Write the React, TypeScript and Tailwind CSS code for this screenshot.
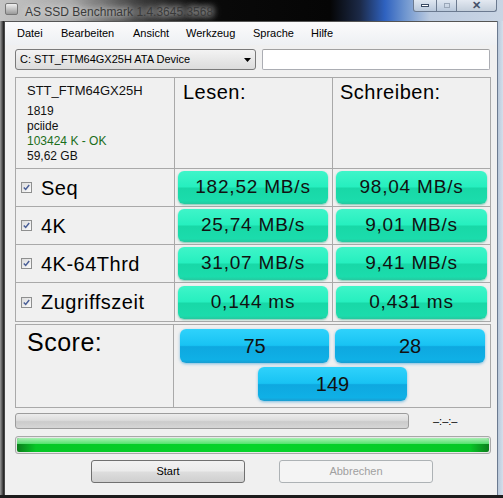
import React from "react";

const font = { fontFamily: '"Liberation Sans", Arial, sans-serif' };

function Check() {
  return (
    <span className="w-[11px] h-[11px] border border-[#8e8f8f] bg-gradient-to-br from-[#dcdcdc] to-[#fbfbfb] flex items-center justify-center shrink-0">
      <svg width="7" height="7" viewBox="0 0 7 7">
        <path d="M0.8 3.4 L2.7 5.4 L6.2 1" stroke="#4a5f97" strokeWidth="1.5" fill="none" />
      </svg>
    </span>
  );
}

function GreenBtn({ v }: { v: string }) {
  return (
    <div className="h-[33px] rounded-[6px] flex items-center justify-center text-[19px] tracking-[0.8px] text-[#111] shadow-[0_1px_2px_rgba(20,160,120,0.5)] bg-[linear-gradient(to_bottom,#3ff5c9_0%,#26efbf_48%,#18d8a7_52%,#1bdcac_90%,#25c9a0_100%)]">
      {v}
    </div>
  );
}

function BlueBtn({ v, w }: { v: string; w: string }) {
  return (
    <div
      className={`${w} h-[34px] rounded-[6px] flex items-center justify-center text-[20px] text-[#111] shadow-[0_1px_3px_rgba(10,140,210,0.5)] bg-[linear-gradient(to_bottom,#2fd2fb_0%,#18c3f3_48%,#0ea8e0_52%,#0fb0e6_90%,#1a9dd0_100%)]`}
    >
      {v}
    </div>
  );
}

const rows = [
  { label: "Seq", r: "182,52 MB/s", w: "98,04 MB/s" },
  { label: "4K", r: "25,74 MB/s", w: "9,01 MB/s" },
  { label: "4K-64Thrd", r: "31,07 MB/s", w: "9,41 MB/s" },
  { label: "Zugriffszeit", r: "0,144 ms", w: "0,431 ms" },
];

export default function App() {
  return (
    <div className="w-[503px] h-[498px] overflow-hidden flex flex-col bg-[#1c1c1c]" style={font}>
      {/* title bar */}
      <div className="h-[21px] shrink-0 flex items-start bg-[linear-gradient(to_right,#c4c4c4_0px,#a9a9a9_70px,#3a3a3a_140px,#0a0a0a_200px,#050505_330px,#1c2a48_360px,#2f62c0_385px,#6e95cf_405px,#bccbe0_430px,#c9d5e4_503px)]">
        <div className="w-[13px] h-[12px] ml-[5px] mt-[3px] rounded-[2px] bg-gradient-to-b from-[#f0f0f0] to-[#9a9a9a] border border-[#777]" />
        <span className="ml-[7px] mt-[3px] text-[12px] text-[#3a3a3a] [text-shadow:0_0_6px_#e8e8e8,0_0_10px_#d0d0d0]">
          AS SSD Benchmark 1.4.3645.3568
        </span>
        <div className="ml-auto mr-[6px] flex h-[12px]">
          <div className="w-[24px] border border-[#6b7a90] border-t-0 rounded-bl-[3px] bg-gradient-to-b from-[#dfe7f1] to-[#b9c8db] flex items-center justify-center">
            <span className="w-[8px] h-[3px] border border-[#394a63] bg-white" />
          </div>
          <div className="w-[20px] border-b border-r border-[#6b7a90] bg-gradient-to-b from-[#dfe7f1] to-[#b9c8db] flex items-center justify-center">
            <span className="w-[6px] h-[5px] border border-[#9aa7b8]" />
          </div>
          <div className="w-[40px] border-b border-r border-[#6b7a90] rounded-br-[3px] bg-gradient-to-b from-[#e3e9f1] to-[#c3cedb] flex items-center justify-center">
            <span className="text-[11px] leading-none text-[#44526a] font-bold">✕</span>
          </div>
        </div>
      </div>

      <div className="flex h-[474px] shrink-0">
        <div className="w-[5px] shrink-0 bg-[linear-gradient(to_right,#9a9a9a,#2a2a2a_70%,#555)]" />
        <div className="w-[492px] shrink-0 flex flex-col bg-[#f0f0f0] border-t border-[#555]">
          {/* menu */}
          <div className="h-[23px] flex items-center pl-[12px] text-[11px] text-black bg-gradient-to-b from-[#fbfbfc] to-[#eef0f3]">
            <span className="w-[44px]">Datei</span>
            <span className="w-[72px]">Bearbeiten</span>
            <span className="w-[53px]">Ansicht</span>
            <span className="w-[67px]">Werkzeug</span>
            <span className="w-[58px]">Sprache</span>
            <span>Hilfe</span>
          </div>

          <div className="pl-[10px] w-[486px]">
            {/* drive select */}
            <div className="flex mt-[4px] h-[21px]">
              <div className="w-[241px] flex items-center border border-[#7a7a7a] rounded-[3px] bg-gradient-to-b from-[#f3f3f3] to-[#dcdcdc] pl-[4px] pr-[4px] text-[11px] text-black">
                <span>C: STT_FTM64GX25H ATA Device</span>
                <svg className="ml-auto" width="7" height="4" viewBox="0 0 7 4">
                  <path d="M0 0 H7 L3.5 4 Z" fill="#000" />
                </svg>
              </div>
              <div className="ml-[6px] w-[228px] border border-[#abadb3] border-t-[#a0a0a0] rounded-[2px] bg-white" />
            </div>

            {/* results table */}
            <div className="mt-[7px] w-[476px] border border-[#a9a9a9] grid grid-cols-[159px_158px_157px]">
              <div className="h-[91px] border-r border-b border-[#a9a9a9] pl-[11px] pt-[5px] flex flex-col text-[12px] leading-[15px] text-[#111]">
                <span className="text-[13px] mb-[6px]">STT_FTM64GX25H</span>
                <span>1819</span>
                <span>pciide</span>
                <span className="text-[#1b6e1b]">103424 K - OK</span>
                <span>59,62 GB</span>
              </div>
              <div className="border-r border-b border-[#a9a9a9] pl-[8px] pt-[4px] text-[20px] leading-none tracking-[0.5px] text-black">Lesen:</div>
              <div className="border-b border-[#a9a9a9] pl-[7px] pt-[4px] text-[20px] leading-none tracking-[0.5px] text-black">Schreiben:</div>

              {rows.map((row, i) => (
                <React.Fragment key={row.label}>
                  <div className={`h-[38px] border-r border-[#a9a9a9] ${i < 3 ? "border-b" : ""} flex items-center pl-[5px] gap-[9px]`}>
                    <Check />
                    <span className="text-[20px] tracking-[0.5px] text-black">{row.label}</span>
                  </div>
                  <div className={`border-r border-[#a9a9a9] ${i < 3 ? "border-b" : ""} pl-[3px] pr-[4px] flex flex-col justify-center`}>
                    <GreenBtn v={row.r} />
                  </div>
                  <div className={`${i < 3 ? "border-b" : ""} border-[#a9a9a9] pl-[3px] pr-[3px] flex flex-col justify-center`}>
                    <GreenBtn v={row.w} />
                  </div>
                </React.Fragment>
              ))}
            </div>

            {/* score */}
            <div className="mt-[2px] h-[84px] w-[476px] border border-[#a9a9a9] flex">
              <div className="w-[158px] shrink-0 border-r border-[#a9a9a9] pl-[11px] pt-[5px] text-[25px] leading-none tracking-[0.5px] text-black">
                Score:
              </div>
              <div className="flex-1 flex flex-col pt-[4px] pl-[6px]">
                <div className="flex gap-[6px]">
                  <BlueBtn v="75" w="w-[149px]" />
                  <BlueBtn v="28" w="w-[150px]" />
                </div>
                <div className="mt-[4px] ml-[78px]">
                  <BlueBtn v="149" w="w-[149px]" />
                </div>
              </div>
            </div>

            {/* progress */}
            <div className="mt-[5px] flex items-center">
              <div className="w-[394px] h-[16px] rounded-[3px] border border-[#9c9c9c] bg-[linear-gradient(to_bottom,#ececec_0%,#dcdcdc_45%,#cbcbcb_55%,#d6d6d6_100%)]" />
              <span className="ml-[24px] text-[11px] text-black">–:–:–</span>
            </div>
            <div className="mt-[6px] w-[476px] h-[18px] rounded-[3px] border border-[#a8a8a8] p-[1px] bg-[#e8e8e8]">
              <div className="h-full rounded-[2px] bg-[linear-gradient(to_right,#0c7d1c_0%,#06c726_4%,#06d42a_50%,#06c726_96%,#0c7d1c_100%)] overflow-hidden">
                <div className="h-[6px] bg-[linear-gradient(to_bottom,#bdf5c4,#5be574)] opacity-90" />
              </div>
            </div>

            {/* buttons */}
            <div className="mt-[6px] flex">
              <div className="ml-[76px] w-[154px] h-[23px] rounded-[3px] border border-[#707070] bg-[linear-gradient(to_bottom,#f2f2f2_0%,#ebebeb_48%,#dddddd_52%,#cfcfcf_100%)] flex items-center justify-center text-[11px] text-black">
                Start
              </div>
              <div className="ml-[34px] w-[154px] h-[23px] rounded-[3px] border border-[#adb2b5] bg-[#f4f4f4] flex items-center justify-center text-[11px] text-[#a0a0a0]">
                Abbrechen
              </div>
            </div>
          </div>
        </div>
        <div className="w-[6px] shrink-0 border-l border-[#6b7a90] bg-[linear-gradient(to_right,#b9c8da,#d4dfeb)]" />
      </div>
    </div>
  );
}
